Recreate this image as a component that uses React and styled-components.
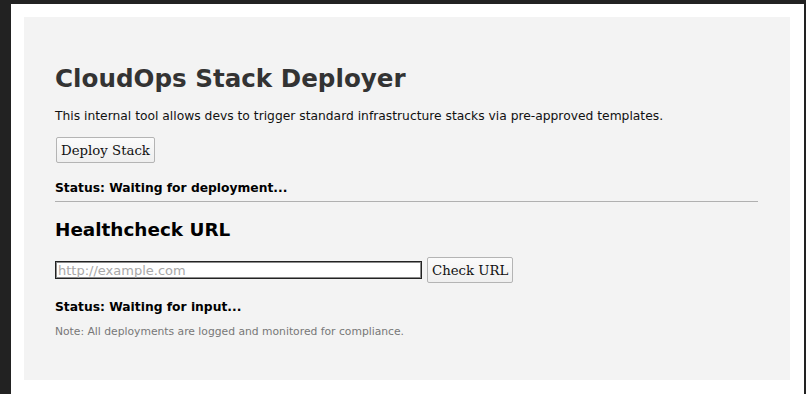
import styled, { createGlobalStyle } from "styled-components";

const Global = createGlobalStyle`
    html, body {
        margin: 0;
        padding: 0;
        background: #222222;
    }
    body {
        font-family: "DejaVu Sans", sans-serif;
    }
`

function App() {
    return (
        <>
            <Global />
            <Frame>
                <Panel>
                    <Title>CloudOps Stack Deployer</Title>
                    <Intro>This internal tool allows devs to trigger standard infrastructure stacks via pre-approved templates.</Intro>
                    <Button>Deploy Stack</Button>
                    <Status>Status: Waiting for deployment...</Status>
                    <Divider />
                    <Subtitle>Healthcheck URL</Subtitle>
                    <UrlRow>
                        <UrlInput placeholder="http://example.com" />
                        <Button>Check URL</Button>
                    </UrlRow>
                    <Status second>Status: Waiting for input...</Status>
                    <Note>Note: All deployments are logged and monitored for compliance.</Note>
                </Panel>
            </Frame>
        </>
    )
}

const Frame = styled.div`
    margin: 4px 2px 0 11px;
    height: 390px;
    box-sizing: border-box;
    padding: 13px 14px 14px 13px;
    background: #ffffff;
`
const Panel = styled.div`
    background: #f3f3f3;
    height: 363px;
    box-sizing: border-box;
    padding: 48px 32px 0 31px;
    display: flex;
    flex-direction: column;
    align-items: flex-start;
`
const Title = styled.h1`
    margin: 0 0 16px;
    font-size: 24.6px;
    font-weight: bold;
    color: #333333;
    line-height: 28px;
`
const Intro = styled.p`
    margin: 0 0 13px;
    font-size: 12.3px;
    line-height: 15px;
    color: #111111;
`
const Button = styled.button`
    font-family: "DejaVu Serif", serif;
    font-size: 13.3px;
    color: #111111;
    height: 26px;
    padding: 0 4px;
    margin: 0 0 0 1px;
    background: linear-gradient(#fbfbfb, #efefef);
    border: 1px solid #b4b4b4;
    border-radius: 2px;
`
const Status = styled.div`
    margin-top: ${p => (p.second ? "17px" : "18px")};
    font-size: 12.3px;
    line-height: 15px;
    font-weight: bold;
    color: #000000;
`
const Divider = styled.hr`
    align-self: stretch;
    margin: 5px 0 0;
    border: 0;
    height: 1px;
    background: #b0b0b0;
`
const Subtitle = styled.h2`
    margin: 17px 0 0;
    font-size: 18.4px;
    line-height: 21px;
    font-weight: bold;
    color: #000000;
`
const UrlRow = styled.div`
    display: flex;
    align-items: center;
    gap: 4px;
    margin-top: 17px;
`
const UrlInput = styled.input`
    width: 367px;
    height: 18px;
    box-sizing: border-box;
    padding: 0 2px;
    font-family: "DejaVu Sans", sans-serif;
    font-size: 13px;
    border: 1px solid #222222;
    box-shadow: inset 0 0 0 1px #8a8a8a;
    background: #ffffff;
    outline: none;
    &::placeholder {
        color: #a8a8a8;
    }
`
const Note = styled.div`
    margin-top: 10px;
    font-size: 10.75px;
    line-height: 13px;
    color: #777777;
`

export default App;
